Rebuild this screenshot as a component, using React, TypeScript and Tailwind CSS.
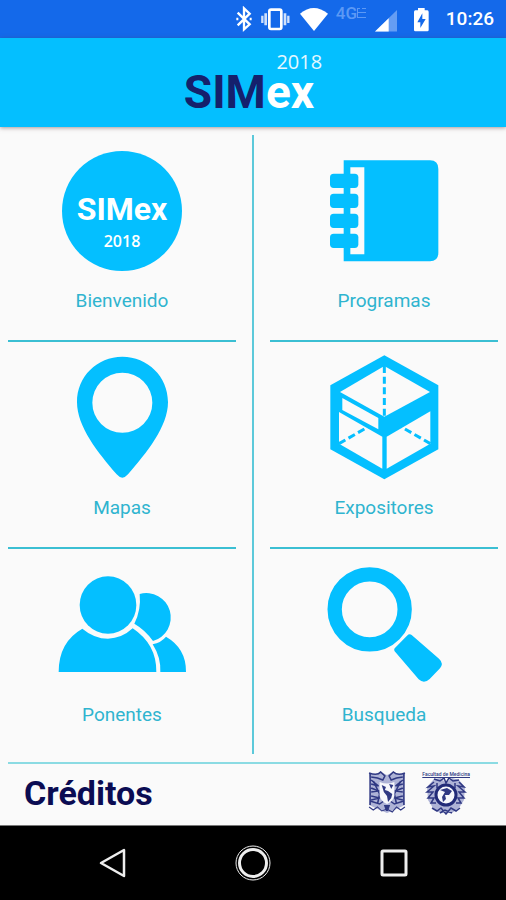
import type { ReactNode } from "react";

const iconClass = "h-[120px] w-32 overflow-visible";

function WelcomeBadge() {
  return (
    <div className="flex size-[120px] flex-col items-center rounded-full bg-[#04bfff] pt-10 text-white">
      <span className="text-[32px]/9 font-bold">SIMex</span>
      <span className="mt-1 font-['Open_Sans',sans-serif] text-[16px]/5 font-semibold">2018</span>
    </div>
  );
}

function NotebookIcon() {
  return (
    <svg viewBox="30 33 384 360" className={iconClass} aria-hidden="true">
      <path fill="#04bfff" d="M101 61H360Q385 61 385 87V338Q385 364 360 364H101Z" />
      <path fill="#fafafa" d="M121 82H163V343H121Z" />
      <g fill="#04bfff">
        <rect x="60" y="101" width="85" height="43" rx="11" />
        <rect x="60" y="161" width="85" height="43" rx="11" />
        <rect x="60" y="221" width="85" height="43" rx="11" />
        <rect x="60" y="281" width="85" height="43" rx="11" />
      </g>
    </svg>
  );
}

function PinIcon() {
  return (
    <svg viewBox="-6 24 384 360" className={iconClass} aria-hidden="true">
      <path
        fill="#04bfff"
        fillRule="evenodd"
        d="M187 20C111 20 51 80 51 156C51 230 114 308 170 373Q187 393 204 373C260 308 324 230 324 156C324 80 263 20 187 20ZM187 68A90 90 0 1 1 187 248A90 90 0 1 1 187 68Z"
      />
    </svg>
  );
}

function BoxIcon() {
  return (
    <svg viewBox="30 24 384 360" className={iconClass} aria-hidden="true">
      <path fill="#04bfff" d="M223 16L385 106V298L223 388L61 298V106Z" />
      <g fill="#fafafa">
        <path d="M223 48L360 126L223 200L90 126Z" />
        <path d="M97 144L205 204V238L97 180Z" />
        <path d="M87 186L217 260V356L87 281Z" />
        <path d="M361 184V281L230 356V260Z" />
      </g>
      <g stroke="#04bfff" strokeWidth="9" fill="none">
        <path d="M223 48V198" strokeDasharray="21 11" />
        <path d="M87 281L175 230" strokeDasharray="22 11" />
        <path d="M361 281L273 230" strokeDasharray="22 11" />
      </g>
    </svg>
  );
}

function PeopleIcon() {
  return (
    <svg viewBox="54 15 384 360" className={iconClass} aria-hidden="true">
      <g fill="#04bfff">
        <path d="M299 102A72 72 0 1 1 339 243Q316 210 283 191Q304 150 299 102Z" />
        <path d="M338 253Q363 248 378 230Q439 265 438 336H361Q363 292 338 253Z" />
        <ellipse cx="204" cy="135" rx="85" ry="86" />
        <path d="M56 336Q56 246 127 206Q163 236 204 236Q246 235 278 205Q350 253 349 336Z" />
      </g>
    </svg>
  );
}

function SearchIcon() {
  return (
    <svg viewBox="30 15 384 360" className={iconClass} aria-hidden="true">
      <circle cx="179" cy="148" r="105" fill="none" stroke="#04bfff" strokeWidth="43" />
      <path
        fill="#04bfff"
        d="M305 225L387 296Q402 310 390 325L359 357Q342 373 326 358L254 274Q250 267 257 262L291 227Q298 220 305 225Z"
      />
    </svg>
  );
}

function Tile({ label, last = false, children }: { label: string; last?: boolean; children: ReactNode }) {
  return (
    <a
      href="#"
      className={
        last
          ? "flex flex-col items-center pt-4 pb-[25px]"
          : "flex flex-col items-center border-b-2 border-[#3bbfd3] pt-4 pb-[25px]"
      }
    >
      {children}
      <span className="mt-4 text-[19px]/7 text-[#2fb4cf]">{label}</span>
    </a>
  );
}

function StatusBar() {
  return (
    <div className="flex h-[38px] items-center justify-end gap-2 bg-[#1469ea] pr-3 text-white">
      <svg viewBox="32 18 48 78" className="h-[26px] w-4" fill="none" stroke="#fff" strokeWidth="7" aria-hidden="true">
        <path d="M37 38L73 73L56 88V25L73 41L37 76" />
        <path d="M33 57h6M73 57h6" />
      </svg>
      <svg viewBox="108 18 96 78" className="h-[26px] w-8" fill="none" stroke="#fff" aria-hidden="true">
        <rect x="136" y="29" width="36" height="58" rx="5" strokeWidth="8" />
        <path d="M125 40V76M183 40V76" strokeWidth="8" opacity=".8" />
        <path d="M115 47V69M193 47V69" strokeWidth="7" opacity=".8" />
      </svg>
      <svg viewBox="223 18 84 78" className="h-[26px] w-7" fill="#fff" aria-hidden="true">
        <path d="M223 41Q264 7 307 41L265 93Z" />
      </svg>
      <span className="mb-3 flex w-[31px] items-center text-[17px]/5 font-medium text-[#5c99f5]">
        4G
        <svg viewBox="0 0 9 12" className="h-3 w-[9px]" stroke="currentColor" aria-hidden="true">
          <path d="M0 1.500h3M5 1.500h4M0 5.500h9M0 10.500h9M0.500 1V11" />
        </svg>
      </span>
      <svg viewBox="445 18 69 78" className="h-[26px] w-[22px]" aria-hidden="true">
        <path fill="#659df3" d="M514 29V96H445Z" />
        <path fill="#fff" d="M488 55V96H445Z" />
      </svg>
      <svg viewBox="564 18 51 78" className="ml-2 h-[26px] w-[17px]" aria-hidden="true">
        <path fill="#fff" d="M579 24H599V31H607Q611 31 611 36V90Q611 94 607 94H571Q567 94 567 90V36Q567 31 571 31H579Z" />
        <path fill="#1469ea" d="M592 40L577 67H586V84L602 57H592Z" />
      </svg>
      <time className="ml-2 text-[19px]/6 font-medium">10:26</time>
    </div>
  );
}

function UniversityCrest() {
  return (
    <svg viewBox="1 0 36 43" className="h-[43px] w-[38px]" preserveAspectRatio="none" aria-hidden="true">
      <path fill="#aeb3d6" d="M2 2Q10 5 13 1L19 4L25 1Q29 5 36 2L34 16L36 34L28 38L19 42L10 38L2 34L4 16Z" />
      <g fill="none" stroke="#303983" strokeWidth="1.500">
        <path d="M2 2Q10 5 13 1L17 5L15 9L10 7L4 6M36 2Q29 5 25 1L21 5L23 9L28 7L34 6" />
        <path d="M3 3V34M35 3V34M4 9L11 15L4 13M4 17L11 20L4 21M4 25L12 27L4 29M34 9L27 15L34 13M34 17L27 20L34 21M34 25L26 27L34 29" />
        <path d="M6 10L12 23L10 33M32 10L26 23L28 33M3 30L12 33L16 30M35 30L26 33L22 30" />
        <path d="M2 36L6 39L10 36L14 40L19 38L24 41L28 36L32 39L36 36" strokeWidth="1" />
      </g>
      <path fill="#f7f8fc" d="M12 11Q19 14 26 11V25Q24 31 19 33Q14 31 12 25Z" />
      <path fill="#303983" d="M14 14L18 16L17 19L20 20L24 23L23 27L20 31L19 25L16 21ZM21 13L25 14L23 18ZM16 34H22L20 40H18Z" />
    </svg>
  );
}

function MedicineCrest() {
  return (
    <svg viewBox="0 0 42 38" className="h-[38px] w-[42px]" aria-hidden="true">
      <path fill="#aeb3d6" d="M9 2L16 1L21 6L27 1L34 3L40 10L39 23L34 31L27 36H15L8 31L3 23L2 10Z" />
      <g fill="none" stroke="#303983" strokeWidth="1.500">
        <path d="M9 2L15 4L19 1L21 6L24 1L28 4L34 3M9 5L3 10L9 9L2 15L8 15L3 21L9 21L6 26L11 26" />
        <path d="M34 5L39 10L33 9L40 15L34 15L39 21L33 21L36 26L31 26M12 6V11M30 6V11" />
        <path d="M7 31L12 34L16 31L21 37L26 31L31 34L35 31M15 36L20 33L27 36" />
      </g>
      <circle cx="21" cy="18" r="10" fill="#f7f8fc" stroke="#222b78" strokeWidth="3" />
      <path fill="#303983" d="M15 13L22 11L27 14L24 18L20 18L21 22L18 25L17 20L20 15Z" />
    </svg>
  );
}

export default function App() {
  return (
    <div className="flex min-h-screen flex-col bg-[#fafafa] font-[Roboto,sans-serif]">
      <StatusBar />
      <header className="flex h-[89px] justify-center bg-[#04bfff] shadow-[0_1px_4px_rgba(90,60,60,0.5)]">
        <h1 className="flex flex-col items-start pt-3">
          <span className="self-end font-['Open_Sans',sans-serif] text-[20px]/6 text-[#e4f8ff]">2018</span>
          <span className="mr-2 text-[46px]/9 font-bold text-white">
            <span className="text-[#15206c]">SIM</span>ex
          </span>
        </h1>
      </header>

      <main className="mt-2 grid grid-cols-[1fr_2px_1fr] gap-x-4 px-2">
        <div>
          <Tile label="Bienvenido"><WelcomeBadge /></Tile>
          <Tile label="Mapas"><PinIcon /></Tile>
          <Tile label="Ponentes" last><PeopleIcon /></Tile>
        </div>
        <div className="bg-[#5cc9da]" />
        <div>
          <Tile label="Programas"><NotebookIcon /></Tile>
          <Tile label="Expositores"><BoxIcon /></Tile>
          <Tile label="Busqueda" last><SearchIcon /></Tile>
        </div>
      </main>

      <footer className="mx-2 mt-2 flex grow items-center border-t-2 border-[#8bdbe3] pr-7 pb-1 pl-4">
        <a href="#" className="text-[34px]/10 font-bold text-[#0b0c53]">Créditos</a>
        <div className="ml-auto flex items-start gap-4">
          <UniversityCrest />
          <div className="flex flex-col items-center">
            <span className="text-[5px]/[6px] font-medium whitespace-nowrap text-[#303983] underline">Facultad de Medicina</span>
            <MedicineCrest />
          </div>
        </div>
      </footer>

      <nav className="flex h-[75px] items-center justify-center gap-[105px] border-t border-[#777] bg-black" aria-label="Sistema">
        <button aria-label="Atrás">
          <svg viewBox="0 0 36 36" className="size-9" fill="none" stroke="#eee" strokeWidth="2.500" strokeLinejoin="round">
            <path d="M30 5V31L7 18Z" />
          </svg>
        </button>
        <button aria-label="Inicio">
          <svg viewBox="0 0 36 36" className="size-9" fill="none" stroke="#eee">
            <circle cx="18" cy="18" r="13.500" strokeWidth="3" />
            <circle cx="18" cy="18" r="17" strokeWidth="1" />
          </svg>
        </button>
        <button aria-label="Recientes">
          <svg viewBox="0 0 36 36" className="size-9" fill="none" stroke="#eee" strokeWidth="3">
            <rect x="6" y="6" width="24" height="24" rx="1" />
          </svg>
        </button>
      </nav>
    </div>
  );
}
